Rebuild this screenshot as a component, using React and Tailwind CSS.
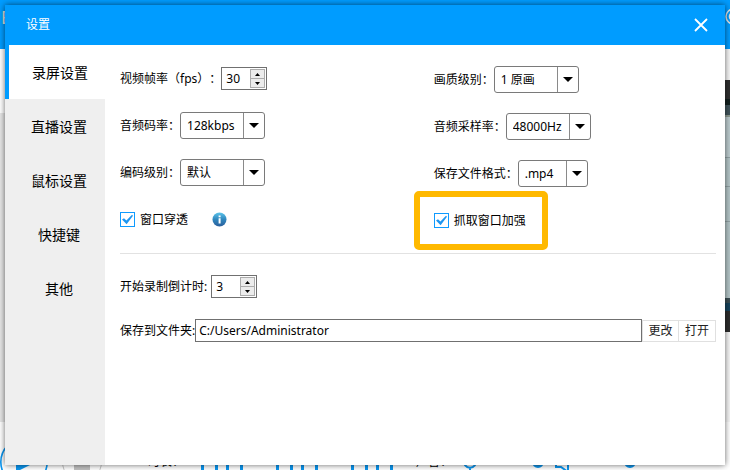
import { useState } from 'react';

const tabs = ['录屏设置', '直播设置', '鼠标设置', '快捷键', '其他'];

function Dropdown({ id, label, options, narrow }) {
    return (
        <div className="flex h-[27px] items-center">
            <label htmlFor={id}>{label}</label>
            <div className={narrow ? 'relative w-[70px]' : 'relative w-[85px]'}>
                <select
                    id={id}
                    className="block h-[27px] w-full appearance-none rounded-[3px] border border-[#7a7a7a] bg-white pl-1.5 text-[12px] outline-none"
                >
                    {options.map((option) => (
                        <option key={option}>{option}</option>
                    ))}
                </select>
                <span className="pointer-events-none absolute inset-y-px right-px flex w-[21px] items-center justify-center border-l border-[#8a8a8a]">
                    <svg width="10" height="5" viewBox="0 0 10 5">
                        <path d="M0 0h10L5 5z" />
                    </svg>
                </span>
            </div>
        </div>
    );
}

function Spinner({ id, initial }) {
    const [value, setValue] = useState(initial);

    return (
        <div className="flex h-[23px] w-[46px] border border-[#707070] bg-white p-px">
            <input
                id={id}
                type="number"
                value={value}
                onChange={(e) => setValue(Number(e.target.value))}
                className="w-0 flex-1 [appearance:textfield] pl-[3px] outline-none [&::-webkit-inner-spin-button]:appearance-none"
            />
            <div className="flex w-[15px] flex-col">
                <button
                    type="button"
                    aria-label="增加"
                    onClick={() => setValue(value + 1)}
                    className="flex flex-1 items-center justify-center border border-[#acacac] bg-[#ececec]"
                >
                    <svg width="5" height="3" viewBox="0 0 5 3">
                        <path d="M0 3h5L2.5 0z" />
                    </svg>
                </button>
                <button
                    type="button"
                    aria-label="减少"
                    onClick={() => setValue(value - 1)}
                    className="flex flex-1 items-center justify-center border border-t-0 border-[#acacac] bg-[#ececec]"
                >
                    <svg width="5" height="3" viewBox="0 0 5 3">
                        <path d="M0 0h5L2.5 3z" />
                    </svg>
                </button>
            </div>
        </div>
    );
}

function Checkbox({ label, highlighted }) {
    return (
        <label className="relative flex h-[27px] items-center gap-[5px]">
            <span className="grid">
                <input
                    type="checkbox"
                    defaultChecked
                    className="peer col-start-1 row-start-1 h-[15px] w-[15px] appearance-none border border-[#0e9bff] bg-white"
                />
                <svg
                    className="pointer-events-none invisible col-start-1 row-start-1 peer-checked:visible"
                    width="15"
                    height="15"
                    viewBox="0 0 15 15"
                >
                    <path d="M2 7.4l2-1.2 2.4 2.2L12 2.8l1 .9L6.6 12.2z" fill="#1e96f0" />
                </svg>
            </span>
            {label}
            {highlighted && (
                <span className="pointer-events-none absolute -inset-y-4 -right-[22px] -left-5 rounded-[5px] border-6 border-[#ffb900]" />
            )}
        </label>
    );
}

function InfoIcon() {
    return (
        <svg width="15" height="15" viewBox="0 0 15 15">
            <defs>
                <linearGradient id="info" x1="0" y1="0" x2="0" y2="1">
                    <stop offset="0" stopColor="#5cc4ea" />
                    <stop offset="0.5" stopColor="#2f86bd" />
                    <stop offset="1" stopColor="#2b5f9c" />
                </linearGradient>
            </defs>
            <circle cx="7.5" cy="7.5" r="7" fill="url(#info)" />
            <path d="M6.6 3.4h2v1.8h-2zM6.6 6.2h2v5.2h-2z" fill="#fff" />
        </svg>
    );
}

// Recorder window that stays behind the settings dialog
function RecorderWindow() {
    return (
        <div className="absolute inset-0 flex flex-col overflow-hidden bg-white">
            <div className="flex h-[49px] shrink-0 justify-between bg-[#009cff] text-[#e4e4e4]">
                <span className="pt-1 pl-px text-[18px]">E</span>
                <svg className="-mr-3 mt-2" width="17" height="17" viewBox="0 0 17 17" fill="none" stroke="currentColor">
                    <circle cx="8.5" cy="8.5" r="7.5" strokeWidth="1.5" />
                    <circle cx="8.5" cy="8.5" r="3.8" strokeWidth="2" />
                </svg>
            </div>
            <div className="flex flex-1">
                <div className="flex flex-1 flex-col">
                    <div className="h-16 bg-white" />
                    <div className="flex-1 bg-[#e6e6e6]" />
                </div>
                <div className="flex w-2 flex-col bg-[#f6f6f6] pt-[31px]">
                    <div className="h-[19px] bg-[#303030]" />
                    <div className="h-1.5 bg-[#13201f]" />
                    <div className="h-2.5 bg-[#40535a]" />
                    <div className="h-0.5 bg-[#8e9a90]" />
                    <div className="h-[41px] border-b border-[#93a3a5] bg-[#bccbce]" />
                    <div className="h-[29px] border-b border-[#93a3a5] bg-[#b4c5c7]" />
                    <div className="h-[35px] border-b border-[#93a3a5] bg-[#b4c5c7]" />
                    <div className="h-[76px] bg-[#b4c5c7]" />
                    <div className="h-[5px] bg-[#3b4d52]" />
                    <div className="h-2 bg-[#17435c]" />
                    <div className="h-[21px] bg-[#2d2d2d]" />
                </div>
            </div>
            <div className="flex h-12 shrink-0 items-start bg-white pt-4">
                <svg className="shrink-0" width="148" height="48" viewBox="0 0 148 48">
                    <circle cx="24" cy="24" r="23.2" fill="none" stroke="#0a96f0" strokeWidth="1.6" />
                    <path d="M16 10v24l24-12z" fill="#0a96f0" />
                    <circle cx="82" cy="24" r="19.5" fill="none" stroke="#c4c4c4" />
                    <path d="M74 16h16v16H74z" fill="#c0c0c0" />
                </svg>
                <span className="w-[53px] shrink-0 pt-4 leading-4">时长：</span>
                <svg className="shrink-0" width="215" height="48" viewBox="0 0 215 48" fill="none" stroke="#0a96f0" strokeWidth="3">
                    <path d="M1.5 8v30M15.5 8v30M26.5 8v30M40.5 8v30M76.5 8v30M90.5 8v30M101.5 8v30M115.5 8v30M151.5 8v30M165.5 8v30M176.5 8v30M190.5 8v30" />
                </svg>
                <span className="w-[44px] shrink-0 pt-4 leading-4">声音：</span>
                <svg className="shrink-0" width="190" height="48" viewBox="0 0 190 48" fill="none" stroke="#0a96f0" strokeWidth="2">
                    <path d="M3 20c0 13 14 13 14 0M10 30v8" />
                    <circle cx="78" cy="24" r="5" fill="#2f86bd" />
                    <path d="M96 18v11h5l7 5V14l-7 4z" />
                    <circle cx="170" cy="24" r="5" fill="#2f86bd" />
                </svg>
            </div>
        </div>
    );
}

export default function App() {
    const [activeTab, setActiveTab] = useState(tabs[0]);

    return (
        <div className="relative flex min-h-screen p-[5px] font-['Noto_Sans','Noto_Sans_CJK_SC',sans-serif] text-[12px] text-black [text-spacing-trim:space-all]">
            <RecorderWindow />
            <div className="relative flex flex-1 flex-col bg-white shadow-[0_0_6px_rgba(0,0,0,0.6)]">
                <header className="flex h-10 items-center justify-between bg-[#009cff] pr-[17px] pl-[21px] text-white">
                    <h1>设置</h1>
                    <button type="button" aria-label="关闭">
                        <svg width="14" height="14" viewBox="0 0 14 14" fill="none" stroke="#fff" strokeWidth="1.8">
                            <path d="M1 1l12 12M13 1L1 13" />
                        </svg>
                    </button>
                </header>
                <div className="flex flex-1">
                    <nav className="flex w-[100px] shrink-0 flex-col bg-[#efefef] text-[14px]">
                        {tabs.map((tab) => (
                            <button
                                key={tab}
                                type="button"
                                onClick={() => setActiveTab(tab)}
                                className={
                                    tab === activeTab
                                        ? 'h-[54px] border-l-4 border-[#009cff] bg-white pl-1.5'
                                        : 'h-[54px] border-l-4 border-transparent pl-1'
                                }
                            >
                                {tab}
                            </button>
                        ))}
                    </nav>
                    <main className="flex-1 pt-5 pr-[9px] pl-[15px]">
                        <div className="grid grid-cols-[10fr_9fr]">
                            <div className="flex flex-col gap-5">
                                <div className="flex h-[27px] items-center">
                                    <label htmlFor="fps">视频帧率（fps）：</label>
                                    <Spinner id="fps" initial={30} />
                                </div>
                                <Dropdown id="bitrate" label="音频码率：" options={['128kbps', '64kbps']} />
                                <Dropdown id="encode" label="编码级别：" options={['默认']} />
                                <div className="flex items-center gap-6">
                                    <Checkbox label="窗口穿透" />
                                    <InfoIcon />
                                </div>
                            </div>
                            <div className="flex flex-col items-start gap-5 pt-px">
                                <Dropdown id="quality" label="画质级别：" options={['1 原画']} />
                                <Dropdown id="sample" label="音频采样率：" options={['48000Hz', '44100Hz']} />
                                <Dropdown id="format" label="保存文件格式：" options={['.mp4', '.avi']} narrow />
                                <Checkbox label="抓取窗口加强" highlighted />
                            </div>
                        </div>
                        <hr className="mt-[19px] border-[#e2e2e2]" />
                        <div className="mt-[21px] flex items-center gap-1">
                            <label htmlFor="countdown">开始录制倒计时:</label>
                            <Spinner id="countdown" initial={3} />
                        </div>
                        <div className="mt-[21px] flex items-center">
                            <label htmlFor="folder">保存到文件夹:</label>
                            <input
                                id="folder"
                                type="text"
                                defaultValue="C:/Users/Administrator"
                                className="h-[23px] min-w-0 flex-1 border border-[#707070] bg-white px-[3px] outline-none"
                            />
                            <button type="button" className="h-[22px] w-[37px] border border-[#e0e0e0] text-[#222]">更改</button>
                            <button type="button" className="h-[22px] w-[37px] border border-l-0 border-[#e0e0e0] text-[#222]">打开</button>
                        </div>
                    </main>
                </div>
            </div>
        </div>
    );
}
